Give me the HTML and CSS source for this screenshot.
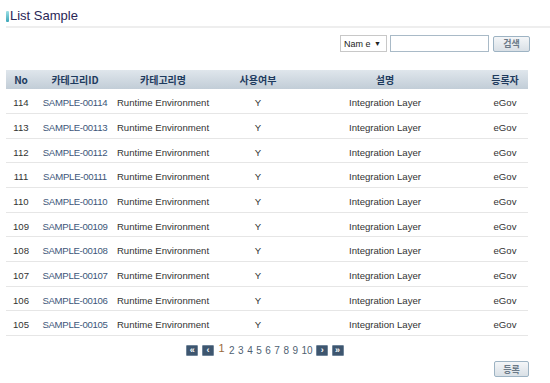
FILE: index.html
```html
<!DOCTYPE html>
<html lang="ko">
<head>
  <meta charset="UTF-8">
  <title>List Sample</title>
  <link rel="stylesheet" href="styles.css">
</head>
<body>
  <div class="title-bar">
    <span class="title-mark"></span>
    <h1 class="title">List Sample</h1>
  </div>

  <div class="content">
    <div class="search">
      <div class="select"><span>Nam e</span><span class="arrow">&#9660;</span></div>
      <input type="text" class="search-input">
      <button class="btn">검색</button>
    </div>

    <table class="list">
      <colgroup>
        <col class="c-no"><col class="c-id"><col class="c-name"><col class="c-use"><col class="c-desc"><col class="c-reg">
      </colgroup>
      <thead>
        <tr>
          <th>No</th>
          <th>카테고리ID</th>
          <th>카테고리명</th>
          <th>사용여부</th>
          <th>설명</th>
          <th class="reg">등록자</th>
        </tr>
      </thead>
      <tbody id="rows"></tbody>
    </table>

    <div class="paging">
      <a class="pg-icon">&laquo;</a>
      <a class="pg-icon">&lsaquo;</a>
      <span class="current">1</span>
      <a>2</a><a>3</a><a>4</a><a>5</a><a>6</a><a>7</a><a>8</a><a>9</a><a>10</a>
      <a class="pg-icon">&rsaquo;</a>
      <a class="pg-icon">&raquo;</a>
    </div>

    <div class="bottom">
      <button class="btn">등록</button>
    </div>
  </div>

  <script>
    // 목록 데이터 생성
    const rows = document.getElementById('rows');
    for (let n = 114; n >= 105; n--) {
      const tr = document.createElement('tr');
      tr.innerHTML =
        `<td>${n}</td>` +
        `<td class="link">SAMPLE-00${n}</td>` +
        `<td>Runtime Environment</td>` +
        `<td>Y</td>` +
        `<td>Integration Layer</td>` +
        `<td class="reg">eGov</td>`;
      rows.appendChild(tr);
    }
  </script>
</body>
</html>
```

FILE: styles.css
```css
body {
  margin: 0;
  font-family: "Liberation Sans", Arial, "Noto Sans CJK KR", sans-serif;
  font-size: 10px;
  color: #333;
  background: #fff;
}
.title-bar {
  display: flex;
  align-items: center;
  margin-left: 6px;
  padding-top: 5px;
  height: 20px;
  border-bottom: 2px solid #eeeeee;
  padding-bottom: 1px;
}
.title-mark {
  width: 3px;
  height: 11px;
  margin-top: 2px;
  border-radius: 1px;
  background: linear-gradient(#9fe0e6, #3aa6b8);
}
.title {
  margin: 0 0 0 1px;
  font-size: 13px;
  font-weight: normal;
  color: #2a2656;
}
.content {
  width: 522px;
  margin-left: 6px;
}
.search {
  display: flex;
  justify-content: flex-end;
  align-items: center;
  gap: 3px;
  margin-top: 7px;
  margin-right: -2px;
  height: 17px;
}
.select {
  box-sizing: border-box;
  display: flex;
  justify-content: space-between;
  align-items: center;
  flex-shrink: 0;
  width: 47px;
  height: 17px;
  border: 1px solid #c8c8c8;
  padding: 0 5px 0 3px;
  font-size: 9px;
  color: #222;
  white-space: nowrap;
}
.select .arrow {
  font-size: 7px;
}
.search-input {
  box-sizing: border-box;
  width: 99px;
  height: 17px;
  border: 1px solid #a9bac7;
  padding: 0;
  margin: 0;
}
.btn {
  box-sizing: border-box;
  width: 37px;
  height: 16px;
  margin-left: 1px;
  padding: 0;
  border: 1px solid #9db3c3;
  border-radius: 2px;
  background: linear-gradient(#f4f6f8, #d9e0e6);
  font-family: "Noto Sans CJK KR", sans-serif;
  font-size: 9px;
  font-weight: bold;
  color: #6b7a88;
  line-height: 13px;
}
.list {
  width: 522px;
  margin-top: 18px;
  border-collapse: collapse;
  table-layout: fixed;
}
.c-no { width: 30px; }
.c-id { width: 78px; }
.c-name { width: 98px; }
.c-use { width: 92px; }
.c-desc { width: 162px; }
.c-reg { width: 62px; }
.list th {
  height: 19px;
  padding: 0;
  background: linear-gradient(#dfe6ec, #c2cdd7);
  font-family: "Noto Sans CJK KR", sans-serif;
  font-size: 10px;
  font-weight: bold;
  color: #1e3b5e;
  text-align: center;
}
.list td {
  box-sizing: border-box;
  height: 24.67px;
  padding: 3px 0 0;
  border-bottom: 1px solid #e6e6e6;
  font-size: 9.6px;
  text-align: center;
  white-space: nowrap;
}
.list .reg {
  padding-left: 16px;
}
.list td.link {
  color: #3d5679;
  letter-spacing: -0.3px;
}
.paging {
  display: flex;
  justify-content: center;
  align-items: center;
  gap: 3.5px;
  margin-top: 7px;
  padding-right: 4px;
  height: 14px;
  color: #4f5f72;
  font-size: 10px;
}
.paging a {
  display: block;
}
.paging .pg-icon {
  box-sizing: border-box;
  width: 12px;
  height: 11px;
  border: 1px solid #6f8499;
  border-radius: 1px;
  background: #3e566f;
  color: #fff;
  font-size: 9px;
  font-weight: bold;
  line-height: 8px;
  text-align: center;
}
.paging .current {
  color: #9a6a3c;
  font-size: 11px;
  margin: -4px 1px 0;
}
.bottom {
  display: flex;
  justify-content: flex-end;
  margin-top: 4px;
  margin-right: -1px;
}
.bottom .btn {
  width: 35px;
}
```
